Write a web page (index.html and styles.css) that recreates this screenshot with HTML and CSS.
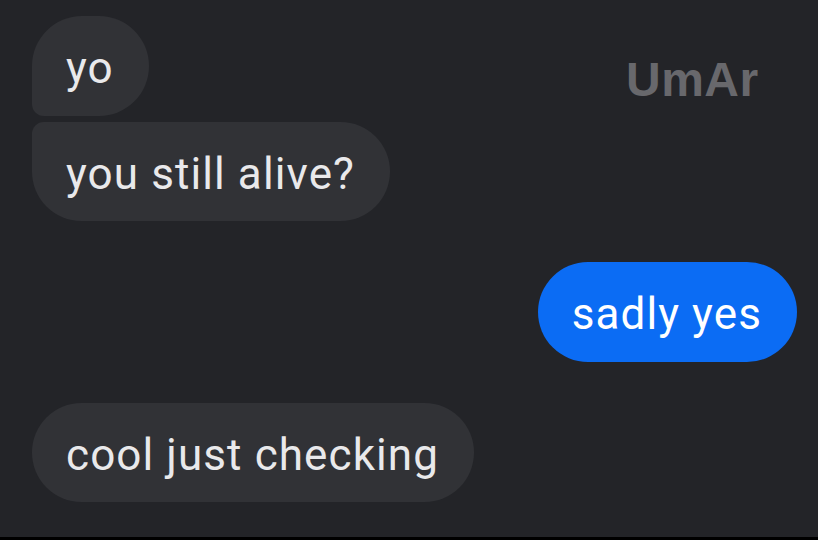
FILE: index.html
```html
<!DOCTYPE html>
<html lang="en">
<head>
    <meta charset="UTF-8">
    <meta name="viewport" content="width=device-width, initial-scale=1.0">
    <title>Chat</title>
    <link rel="stylesheet" href="styles.css">
</head>
<body>
    <div class="chat">
        <!-- Watermark -->
        <div class="watermark">UmAr</div>

        <!-- Messages -->
        <div class="group">
            <div class="bubble in first">yo</div>
            <div class="bubble in last">you still alive?</div>
        </div>
        <div class="bubble out">sadly yes</div>
        <div class="bubble in single">cool just checking</div>
    </div>
</body>
</html>
```

FILE: styles.css
```css
* {
    box-sizing: border-box;
    margin: 0;
    padding: 0;
}
body {
    background-color: #000;
    font-family: Roboto, "Liberation Sans", sans-serif;
}
.chat {
    position: relative;
    display: flex;
    flex-direction: column;
    align-items: flex-start;
    height: 537px;
    padding: 16px 21px 0 32px;
    background-color: #232428;
}
.watermark {
    position: absolute;
    top: 52px;
    left: 626px;
    font-family: "Liberation Sans", Arial, sans-serif;
    font-weight: bold;
    font-size: 48px;
    letter-spacing: 0.5px;
    color: #68686c;
}
.group {
    display: flex;
    flex-direction: column;
    align-items: flex-start;
    gap: 6px;
}
.bubble {
    display: flex;
    align-items: center;
    height: 99px;
    padding: 4px 35px 0 34px;
    border-radius: 50px;
    font-size: 44px;
    letter-spacing: 1.1px;
    color: #e9e9eb;
    background-color: #313236;
}
.bubble.first {
    height: 100px;
    border-bottom-left-radius: 12px;
}
.bubble.last {
    border-top-left-radius: 12px;
}
.bubble.out {
    align-self: flex-end;
    height: 100px;
    margin-top: 41px;
    color: #fff;
    background-color: #0b6cf4;
}
.bubble.single {
    margin-top: 41px;
}
```
